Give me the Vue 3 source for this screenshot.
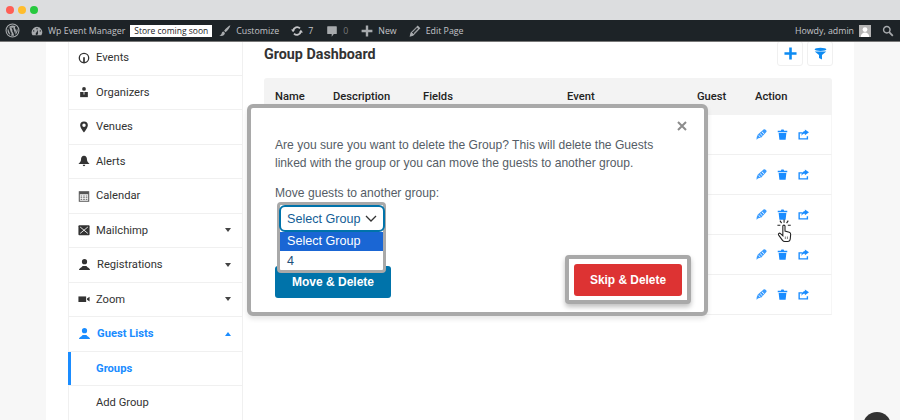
<template>
	<div class="shot">
		<div class="chrome">
			<span class="dot red"></span>
			<span class="dot yellow"></span>
			<span class="dot green"></span>
		</div>

		<div class="adminbar">
			<svg class="wp-logo" viewBox="0 0 20 20"><circle cx="10" cy="10" r="8.6" fill="none" stroke="#a7aaad" stroke-width="1.4"/><path d="M3.4 10c0 2.7 1.6 5 3.9 6L4 7.2c-.4.9-.6 1.8-.6 2.8zm11.1-.3c0-.8-.3-1.4-.6-1.8-.3-.6-.6-1-.6-1.6 0-.6.5-1.2 1.2-1.2h.1A6.6 6.6 0 0 0 4.600 6.200h.4c.7 0 1.800-.1 1.800-.1.4 0 .4.500 0 .6 0 0-.4 0-.8.1l2.500 7.500 1.500-4.500-1.100-2.900c-.4 0-.7-.1-.7-.1-.4 0-.3-.6 0-.6 0 0 1.100.1 1.800.1s1.800-.1 1.800-.1c.4 0 .4.500 0 .6 0 0-.4 0-.8.1l2.500 7.400.7-2.300c.3-.9.500-1.600.5-2.200zM10.100 10.600l-2 6a6.600 6.600 0 0 0 4.100-.1l-2.100-5.900zm5.800-3.900c0 .2.100.5.100.7 0 .7-.1 1.400-.5 2.400l-2 5.900a6.600 6.600 0 0 0 2.400-9z" fill="#a7aaad"/></svg>
			<svg class="ab-icon dash" viewBox="0 0 20 20"><path d="M10 3a9 9 0 0 0-9 9c0 2 .7 3.800 1.800 5h14.400A9 9 0 0 0 10 3zm0 2.200a1.200 1.200 0 1 1 0 2.400 1.200 1.200 0 0 1 0-2.400zM4.500 11a1.200 1.200 0 1 1 0-2.400 1.200 1.200 0 0 1 0 2.400zm6.700 4a1.700 1.700 0 1 1-2.900-1.300l2.900-5.200.5 5.500zm4.300-4a1.200 1.200 0 1 1 0-2.400 1.200 1.200 0 0 1 0 2.400z" fill="#a7aaad"/></svg>
			<span class="ab-text site">Wp Event Manager</span>
			<span class="store-badge">Store coming soon</span>
			<svg class="ab-icon brush" viewBox="0 0 20 20"><path d="M19 .5c-3 1-8 5.500-10.500 9l2.500 2.500c3.500-2.500 7.500-8 8-11.500zM7.500 10.800c-2.300.3-2.800 2-3.300 3.600-.4 1.200-1.200 2-3.700 2.800 3.500 1.800 8.500 1.200 9.500-3.800z" fill="#a7aaad"/></svg>
			<span class="ab-text">Customize</span>
			<svg class="ab-icon sync" viewBox="0 0 20 20"><path d="M3.500 9A6.800 6.800 0 0 1 15 5.500M16.500 11A6.800 6.800 0 0 1 5 14.500" fill="none" stroke="#c3c4c7" stroke-width="3"/><path d="M0 7.500h7L3.500 12zM20 12.500h-7L16.500 8z" fill="#c3c4c7"/></svg>
			<span class="ab-text count">7</span>
			<svg class="ab-icon comment" viewBox="0 0 20 20"><path d="M3 2h14a1 1 0 0 1 1 1v11a1 1 0 0 1-1 1h-4l-3.500 4.500V15H3a1 1 0 0 1-1-1V3a1 1 0 0 1 1-1z" fill="#a7aaad"/></svg>
			<span class="ab-text muted">0</span>
			<svg class="ab-icon plus" viewBox="0 0 20 20"><path d="M8 1h4v7h7v4h-7v7H8v-7H1V8h7z" fill="#a7aaad"/></svg>
			<span class="ab-text">New</span>
			<svg class="ab-icon pencil" viewBox="0 0 20 20"><path d="M14.500 1l4.500 4.500L7 18l-6 1.500L2.500 13zM5 12.500l2.500 2.500 8-8.500-2.500-2.500z" fill="#a7aaad" fill-rule="evenodd"/><path d="M6 11.500l7-7M8 13.500l7-7" stroke="#a7aaad" stroke-width="1"/></svg>
			<span class="ab-text">Edit Page</span>
			<span class="ab-text howdy">Howdy, admin</span>
			<span class="avatar">
				<svg viewBox="0 0 12 12"><circle cx="6" cy="4.600" r="2.400" fill="#fff"/><path d="M1.800 12c0-3 2-4.500 4.200-4.500s4.200 1.500 4.200 4.500z" fill="#fff"/></svg>
			</span>
			<svg class="ab-icon search" viewBox="0 0 20 20"><circle cx="8" cy="8" r="5.400" fill="none" stroke="#a7aaad" stroke-width="2.400"/><path d="M12 12l6 6" stroke="#a7aaad" stroke-width="3"/></svg>
		</div>

		<div class="page">
			<div class="panel">
				<nav class="sidebar">
					<div v-for="item in menu" :key="item.label" class="menu-item" :class="{ active: item.active, sub: item.sub, selected: item.selected, wide: item.wide }">
						<svg v-if="item.icon" class="menu-icon" viewBox="0 0 14 14" v-html="item.icon"></svg>
						<span>{{ item.label }}</span>
						<span v-if="item.arrow" class="arrow" :class="item.arrow"></span>
					</div>
				</nav>

				<main class="content">
					<div class="head">
						<h2>Group Dashboard</h2>
						<div class="head-buttons">
							<button class="square">
								<svg viewBox="0 0 14 14"><path d="M5.600 .5h2.800v5.100h5.100v2.800H8.400v5.100H5.600V8.400H.5V5.600h5.100z" fill="#0d8bf2"/></svg>
							</button>
							<button class="square">
								<svg viewBox="0 0 14 14"><ellipse cx="7" cy="2.500" rx="6.300" ry="1.800" fill="#0d8bf2"/><path d="M.8 4.800h12.400L8.600 8.500v5l-3.200-1.600V8.500z" fill="#0d8bf2"/></svg>
							</button>
						</div>
					</div>

					<div class="table">
						<div class="thead">
							<span v-for="col in columns" :key="col">{{ col }}</span>
						</div>
						<div v-for="row in 5" :key="row" class="trow">
							<div class="actions">
								<svg viewBox="0 0 12 12"><path d="M8.300.5c1.700-.6 3.500.9 3.200 2.500L5.500 9.500 2.500 10.200 .5 11.800l.3-3 1.200-2.800z" fill="#3a9cff"/><path d="M2.800 6.900l2.300 2.200M4.500 5l2.500 2.400M6.400 3l2.500 2.400" stroke="#fff" stroke-width="1"/></svg>
								<svg viewBox="0 0 12 12"><path d="M.8 1.800h3.400L4.800.5h2.400l.6 1.300h3.400v1.800H.8zM1.800 4.300h8.400l-.8 7.500H2.600z" fill="#1a8cff"/></svg>
								<svg viewBox="0 0 12 12"><path d="M.5 3.500h4v1.500H2v5h7.500V8H11v3.500H.5zM7.500 .5L12 3.600 7.500 6.800V5.200C5.700 5.200 4.500 5.900 3.700 7.500 3.800 4.800 5.200 2.700 7.500 2.300z" fill="#1a8cff"/></svg>
							</div>
						</div>
					</div>
				</main>
			</div>
		</div>

		<div class="modal">
			<svg class="close" viewBox="0 0 10 10"><path d="M1 1l8 8M9 1l-8 8" stroke="#8c8c8c" stroke-width="2"/></svg>
			<p class="message">Are you sure you want to delete the Group? This will delete the Guests<br>linked with the group or you can move the guests to another group.</p>
			<label class="move-label">Move guests to another group:</label>
			<div class="picker">
				<div class="select">
					<span>Select Group</span>
					<svg viewBox="0 0 12 7"><path d="M1 1l5 5 5-5" fill="none" stroke="#333" stroke-width="1.300"/></svg>
				</div>
				<div class="options">
					<div class="option current">Select Group</div>
					<div class="option">4</div>
				</div>
			</div>
			<div class="modal-actions">
				<button class="move-btn">Move &amp; Delete</button>
				<div class="skip-frame">
					<button class="skip-btn">Skip &amp; Delete</button>
				</div>
			</div>
		</div>

		<svg class="pointer" viewBox="0 0 20 30">
			<path d="M9.500 .5v4M4.500 2l2 3M14.500 2l-2 3M1.500 7.500h3.500M14 7.500h3.500" stroke="#222" stroke-width="1.300"/>
			<path d="M8 8.500c0-1.600 2.600-1.600 2.600 0v6l5 1.500c1.200.4 1.900 1.300 1.800 2.500l-.5 5.500c-.2 1.700-1.300 3-3 3h-3.500c-1.300 0-2.200-.6-3-1.700l-4.400-6c-1-1.500.8-3 2.200-1.800L8 20z" fill="#fff" stroke="#222" stroke-width="1.300"/>
			<path d="M11 21v3M13.500 21v3" stroke="#666" stroke-width="1"/>
		</svg>

		<div class="fab"></div>
	</div>
</template>

<script setup>
const columns = ['Name', 'Description', 'Fields', 'Event', 'Guest', 'Action'];

const guestIcon = '<circle cx="7" cy="4" r="2.800" fill="currentColor"/><path d="M1 13c0-2 2.500-2.500 4-4.500h4c1.500 2 4 2.500 4 4.500z" fill="currentColor"/>';

const menu = [
	{ label: 'Events', icon: '<circle cx="7" cy="7" r="5.500" fill="none" stroke="currentColor" stroke-width="1.500"/><path d="M7 6v7" stroke="currentColor" stroke-width="2"/>' },
	{ label: 'Organizers', icon: '<circle cx="7" cy="3.400" r="2.200" fill="currentColor"/><path d="M2.500 7h9v6h-9z" fill="currentColor"/><path d="M7 7v3" stroke="#fff"/>' },
	{ label: 'Venues', icon: '<path d="M7 .5a4.500 4.500 0 0 0-4.500 4.500C2.500 8 7 13.500 7 13.500s4.500-5.500 4.500-8.500A4.500 4.500 0 0 0 7 .5zm0 6.500a2 2 0 1 1 0-4 2 2 0 0 1 0 4z" fill="currentColor" fill-rule="evenodd"/>' },
	{ label: 'Alerts', icon: '<path d="M7 1c-2.500 0-3.500 2-3.500 4.500 0 2-1.500 3.500-3 5h13c-1.500-1.500-3-3-3-5C10.500 3 9.500 1 7 1zM5.500 11.500a1.500 1.500 0 0 0 3 0z" fill="currentColor"/>' },
	{ label: 'Calendar', icon: '<path d="M1.500 2h11v11h-11z" fill="none" stroke="#555" stroke-width="1.200"/><path d="M1.500 2h11v3h-11z" fill="#555"/><path d="M3 7h8M3 9h8M3 11h8" stroke="#555" stroke-dasharray="2 1"/>' },
	{ label: 'Mailchimp', arrow: 'down', icon: '<rect x=".5" y="1.500" width="13" height="11.500" rx="1" fill="currentColor"/><path d="M2.500 3.500l9 7.500M11.500 3.500l-9 7.500" stroke="#fff" stroke-width="1"/>' },
	{ label: 'Registrations', arrow: 'down', wide: true, icon: guestIcon },
	{ label: 'Zoom', arrow: 'down', icon: '<rect x=".5" y="4" width="9" height="6.500" fill="currentColor"/><path d="M10.500 6.500l3-2v5.500l-3-2z" fill="currentColor"/>' },
	{ label: 'Guest Lists', arrow: 'up', active: true, wide: true, icon: guestIcon },
	{ label: 'Groups', sub: true, active: true, selected: true },
	{ label: 'Add Group', sub: true }
];
</script>

<style scoped>
.shot {
	position: relative;
	width: 900px;
	height: 420px;
	overflow: hidden;
	background: #fff;
	font-family: Roboto, "Liberation Sans", sans-serif;
}

.chrome {
	height: 20px;
	background: #dcdddf;
	display: flex;
	align-items: center;
	gap: 4px;
	padding-left: 6px;
	box-sizing: border-box;
}

.dot {
	width: 8px;
	height: 8px;
	border-radius: 50%;
}
.red { background: #ff5f56; }
.yellow { background: #ffbd2e; }
.green { background: #27c93f; }

.adminbar {
	height: 22px;
	background: #1d2327;
	border-bottom: 1px solid #777;
	box-sizing: border-box;
	display: flex;
	align-items: center;
	padding-left: 5px;
	color: #c3c4c7;
	font-family: "Open Sans", sans-serif;
	font-size: 8.800px;
}

.wp-logo {
	width: 15px;
	height: 15px;
}

.ab-icon {
	width: 12px;
	height: 12px;
	flex: none;
}

.dash { margin-left: 11px; }
.site { margin-left: 5px; }
.brush { margin-left: 7px; }
.sync { margin-left: 12px; }
.comment { margin-left: 13px; }
.plus { margin-left: 13px; }
.pencil { margin-left: 12px; }

.ab-text { white-space: nowrap; }
.ab-icon + .ab-text { margin-left: 5px; }
.muted { color: #777; }

.store-badge {
	margin-left: 5px;
	background: #fff;
	color: #1d2327;
	padding: 0 4px;
	height: 12px;
	line-height: 12px;
	font-size: 8.500px;
	white-space: nowrap;
}

.howdy { margin-left: auto; }

.avatar {
	margin-left: 5px;
	width: 12px;
	height: 12px;
	background: #b5b5b5;
	display: flex;
}

.search { margin: 0 6px 0 11px; }

.page {
	background: #f7f7f7;
	padding: 0 46px;
	height: 378px;
	overflow: hidden;
}

.panel {
	background: #fff;
	height: 100%;
	padding-left: 22px;
	display: flex;
}

.sidebar {
	width: 175px;
	flex: none;
	box-sizing: border-box;
	border-left: 1px solid #f0f0f0;
	border-right: 1px solid #f0f0f0;
	margin-top: -1px;
}

.menu-item {
	height: 34.500px;
	box-sizing: border-box;
	border-bottom: 1px solid #f0f0f0;
	display: flex;
	align-items: center;
	gap: 6px;
	padding-left: 9px;
	font-size: 11.200px;
	color: #333;
}

.menu-item.wide .menu-icon {
	width: 13px;
	height: 13px;
}

.menu-item.active {
	color: #1a8cff;
	font-weight: 700;
}

.menu-item.sub {
	padding-left: 27px;
}

.menu-item.selected {
	margin-left: -1px;
	padding-left: 28px;
	box-shadow: inset 3px 0 0 #1a8cff;
}

.menu-icon {
	width: 12px;
	height: 12px;
	flex: none;
}

.arrow {
	margin-left: auto;
	margin-right: 11px;
	border-left: 3px solid transparent;
	border-right: 3px solid transparent;
}
.arrow.down { border-top: 4px solid #444; }
.arrow.up { border-bottom: 4px solid #1a8cff; }

.content {
	flex: 1;
	min-width: 0;
	padding: 0 21px;
}

.head {
	height: 36px;
	display: flex;
	justify-content: space-between;
	align-items: flex-start;
}

.head h2 {
	margin: 3px 0 0;
	font-size: 14.300px;
	line-height: 18px;
	font-weight: 700;
	color: #333;
}

.head-buttons {
	display: flex;
	gap: 4px;
	margin-top: -1px;
}

.square {
	width: 26px;
	height: 25px;
	padding: 0;
	background: #fff;
	border: 1px solid #f0f0f0;
	border-radius: 3px;
	display: flex;
	align-items: center;
	justify-content: center;
}

.square svg {
	width: 13px;
	height: 13px;
}

.table {
	width: 568px;
}

.thead {
	height: 37px;
	background: #f3f3f3;
	border-radius: 3px 3px 0 0;
	display: grid;
	grid-template-columns: 58px 90px 144px 130px 58px 1fr;
	align-items: center;
	padding-left: 11px;
	font-size: 11.200px;
	font-weight: 500;
	color: #222;
}

.trow {
	height: 40px;
	box-sizing: border-box;
	border-bottom: 1px solid #f0f0f0;
	border-right: 1px solid #f6f6f6;
	display: flex;
	justify-content: flex-end;
	align-items: center;
	padding-right: 22px;
}

.actions {
	display: flex;
	gap: 10px;
}

.actions svg {
	width: 11px;
	height: 11px;
}

.modal {
	position: absolute;
	left: 247px;
	top: 104px;
	width: 461px;
	height: 212px;
	box-sizing: border-box;
	background: #fff;
	border: 4px solid #a9a9a9;
	border-radius: 6px;
	padding: 28px 13px 0 24px;
	font-family: "Liberation Sans", Arial, sans-serif;
	color: #555d66;
	font-size: 12.100px;
	line-height: 18px;
	box-shadow: 0 3px 5px rgba(0, 0, 0, 0.1);
}

.modal::before {
	content: "";
	position: absolute;
	left: 8px;
	right: 80px;
	top: -4px;
	bottom: -4px;
	z-index: -1;
	box-shadow: 0 0 12px rgba(0, 0, 0, 0.18);
}

.close {
	position: absolute;
	right: 17px;
	top: 13px;
	width: 10px;
	height: 10px;
}

.message {
	margin: 0 0 12px;
}

.move-label {
	display: block;
}

.picker {
	position: relative;
	height: 53px;
}

.select {
	position: absolute;
	left: 4px;
	top: 3px;
	width: 106px;
	height: 27px;
	box-sizing: border-box;
	background: #fff;
	border: 2px solid #0073aa;
	border-radius: 6px;
	color: #135e96;
	font-size: 12.600px;
	display: flex;
	align-items: center;
	justify-content: space-between;
	padding: 0 6px;
	white-space: nowrap;
	z-index: 2;
}

.select svg {
	width: 12px;
	height: 7px;
	flex: none;
}

.options {
	position: absolute;
	left: 2px;
	top: 0;
	width: 109px;
	height: 71px;
	box-sizing: border-box;
	border: 3px solid #a9a9a9;
	border-radius: 4px;
	padding-top: 27px;
	background: #fff;
	z-index: 1;
	color: #1f4f7a;
	font-size: 12.600px;
}

.option {
	height: 19px;
	line-height: 20px;
	padding-left: 7px;
}

.option.current {
	background: #1a66d4;
	color: #fff;
	line-height: 19px;
}

.modal-actions {
	display: flex;
	justify-content: space-between;
	align-items: flex-end;
}

.move-btn {
	width: 116px;
	height: 32px;
	margin-bottom: 6px;
	background: #0073aa;
	color: #fff;
	border: 0;
	border-radius: 3px;
	font: 700 12px "Liberation Sans", Arial, sans-serif;
}

.skip-frame {
	border: 4px solid #a9a9a9;
	border-radius: 4px;
	padding: 5px 5px 4px;
	background: #fff;
	box-shadow: 0 3px 5px rgba(0, 0, 0, 0.25);
}

.skip-btn {
	display: block;
	width: 108px;
	height: 32px;
	background: #dd3333;
	color: #fff;
	border: 0;
	border-radius: 3px;
	font: 700 11.900px "Liberation Sans", Arial, sans-serif;
}

.pointer {
	position: absolute;
	left: 776px;
	top: 219px;
	width: 17px;
	height: 25px;
}

.fab {
	position: absolute;
	left: 863px;
	top: 412px;
	width: 28px;
	height: 28px;
	border-radius: 50%;
	background: #333;
}
</style>
<style>
body { margin: 0; }
</style>
